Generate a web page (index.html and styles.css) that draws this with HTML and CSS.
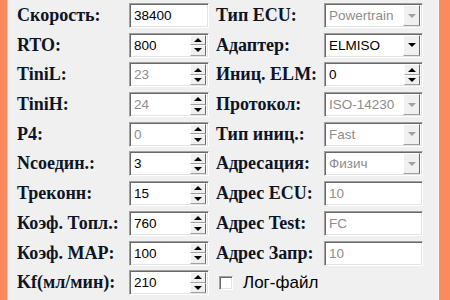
FILE: index.html
```html
<!DOCTYPE html>
<html>
<head>
<meta charset="utf-8">
<link rel="stylesheet" href="styles.css">
</head>
<body>
<div class="frame">
  <div class="lbar"></div>
  <div class="content">
    <div class="lbl">Скорость:</div>
    <div class="box edit"><span class="val">38400</span></div>
    <div class="lbl">Тип ECU:</div>
    <div class="box combo dis"><span class="val">Powertrain</span><span class="dd"><i class="tri"></i></span></div>

    <div class="lbl">RTO:</div>
    <div class="box spin"><span class="val">800</span><span class="sb"><i class="up"></i><i class="dn"></i></span></div>
    <div class="lbl">Адаптер:</div>
    <div class="box combo"><span class="val">ELMISO</span><span class="dd"><i class="tri"></i></span></div>

    <div class="lbl">TiniL:</div>
    <div class="box spin dis"><span class="val">23</span><span class="sb"><i class="up"></i><i class="dn"></i></span></div>
    <div class="lbl">Иниц. ELM:</div>
    <div class="box spin"><span class="val">0</span><span class="sb"><i class="up"></i><i class="dn"></i></span></div>

    <div class="lbl">TiniH:</div>
    <div class="box spin dis"><span class="val">24</span><span class="sb"><i class="up"></i><i class="dn"></i></span></div>
    <div class="lbl">Протокол:</div>
    <div class="box combo dis"><span class="val">ISO-14230</span><span class="dd"><i class="tri"></i></span></div>

    <div class="lbl">P4:</div>
    <div class="box spin dis"><span class="val">0</span><span class="sb"><i class="up"></i><i class="dn"></i></span></div>
    <div class="lbl">Тип иниц.:</div>
    <div class="box combo dis"><span class="val">Fast</span><span class="dd"><i class="tri"></i></span></div>

    <div class="lbl">Nсоедин.:</div>
    <div class="box spin"><span class="val">3</span><span class="sb"><i class="up"></i><i class="dn"></i></span></div>
    <div class="lbl">Адресация:</div>
    <div class="box combo dis"><span class="val">Физич</span><span class="dd"><i class="tri"></i></span></div>

    <div class="lbl">Треконн:</div>
    <div class="box spin"><span class="val">15</span><span class="sb"><i class="up"></i><i class="dn"></i></span></div>
    <div class="lbl">Адрес ECU:</div>
    <div class="box edit dis"><span class="val">10</span></div>

    <div class="lbl">Коэф. Топл.:</div>
    <div class="box spin"><span class="val">760</span><span class="sb"><i class="up"></i><i class="dn"></i></span></div>
    <div class="lbl">Адрес Test:</div>
    <div class="box edit dis"><span class="val">FC</span></div>

    <div class="lbl">Коэф. MAP:</div>
    <div class="box spin"><span class="val">100</span><span class="sb"><i class="up"></i><i class="dn"></i></span></div>
    <div class="lbl">Адрес Запр:</div>
    <div class="box edit dis"><span class="val">10</span></div>

    <div class="lbl">Kf(мл/мин):</div>
    <div class="box spin"><span class="val">210</span><span class="sb"><i class="up"></i><i class="dn"></i></span></div>
    <div class="chkrow"><span class="chk"></span><span class="chklbl">Лог-файл</span></div>
  </div>
  <div class="rbar"></div>
</div>
</body>
</html>
```

FILE: styles.css
```css
html, body {
  margin: 0;
  padding: 0;
  width: 450px;
  height: 300px;
  overflow: hidden;
  background: #f0f0f0;
}
.frame {
  display: flex;
  width: 450px;
  height: 300px;
}
.lbar {
  width: 7px;
  background: #fb8a5c;
  border-right: 1px solid #f7c4ac;
}
.rbar {
  width: 11px;
  background: #fb8a5c;
  border-left: 1px solid #fbfbfb;
}
.content {
  flex: 1;
  display: grid;
  grid-template-columns: 112px 80px 115px 99px;
  column-gap: 0;
  grid-auto-rows: 25px;
  row-gap: 4.7px;
  padding: 3px 0 0 9px;
  align-content: start;
}
.content > .lbl:nth-child(4n+3) {
  padding-left: 7px;
}
.lbl {
  font-family: "Liberation Serif", "Times New Roman", serif;
  font-weight: bold;
  font-size: 18px;
  color: #0c1426;
  display: flex;
  align-items: center;
  white-space: nowrap;
}
.box {
  position: relative;
  box-sizing: border-box;
  height: 25px;
  background: #fff;
  border-top: 1px solid #a0a0a0;
  border-left: 1px solid #a0a0a0;
  border-bottom: 1px solid #fff;
  border-right: 1px solid #fff;
  box-shadow: inset 1px 1px 0 #696969, inset -1px -1px 0 #e3e3e3;
  display: flex;
  align-items: center;
  font-family: "Liberation Sans", Arial, sans-serif;
  font-size: 13.5px;
  color: #000;
}
.val {
  padding-left: 4px;
  flex: 1;
}
.dis .val {
  color: #8d8d8d;
}
.sb {
  width: 16px;
  height: 21px;
  margin-right: 2px;
  display: flex;
  flex-direction: column;
}
.sb i {
  flex: 1;
  background: #f0f0f0;
  border-top: 1px solid #fff;
  border-left: 1px solid #fff;
  border-bottom: 1px solid #a0a0a0;
  border-right: 1px solid #696969;
  display: flex;
  align-items: center;
  justify-content: center;
}
.sb i::after {
  content: "";
  width: 0;
  height: 0;
  border-left: 4px solid transparent;
  border-right: 4px solid transparent;
}
.sb .up::after {
  border-bottom: 4px solid #000;
}
.sb .dn::after {
  border-top: 4px solid #000;
}
.dd {
  width: 17px;
  height: 21px;
  margin-right: 2px;
  box-sizing: border-box;
  background: #f0f0f0;
  border-top: 1px solid #fff;
  border-left: 1px solid #fff;
  border-bottom: 1px solid #a0a0a0;
  border-right: 1px solid #696969;
  display: flex;
  align-items: center;
  justify-content: center;
}
.tri {
  width: 0;
  height: 0;
  border-left: 4px solid transparent;
  border-right: 4px solid transparent;
  border-top: 4px solid #000;
}
.dis .tri {
  border-top-color: #a0a0a0;
}
.chkrow {
  grid-column: 3 / 5;
  display: flex;
  align-items: center;
  padding-left: 10px;
}
.chk {
  box-sizing: border-box;
  width: 14px;
  height: 14px;
  background: #fff;
  border-top: 1px solid #a0a0a0;
  border-left: 1px solid #a0a0a0;
  border-bottom: 1px solid #fff;
  border-right: 1px solid #fff;
  box-shadow: inset 1px 1px 0 #696969, inset -1px -1px 0 #e3e3e3;
}
.chklbl {
  margin-left: 10px;
  font-family: "Liberation Sans", Arial, sans-serif;
  font-size: 17px;
  color: #000;
}
```
